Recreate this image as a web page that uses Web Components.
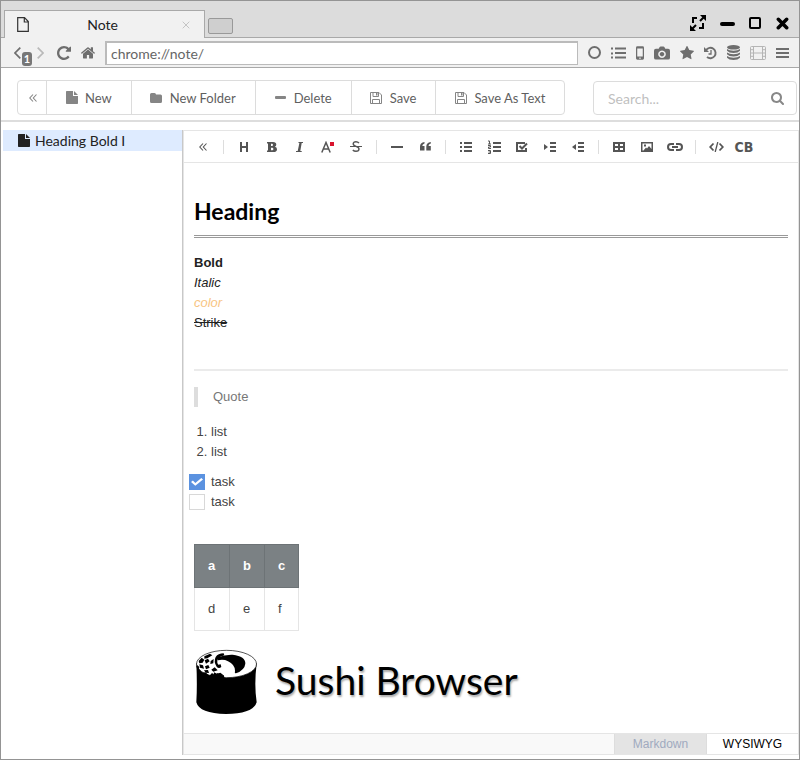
<!DOCTYPE html>
<html lang="en">
<head>
<meta charset="utf-8">
<meta name="viewport" content="width=device-width, initial-scale=1">
<title>Note</title>
<style>
  html, body { margin: 0; background: #fff; }
  body { font: 14px/20px Lato, "Liberation Sans", sans-serif; color: #222; }
</style>
</head>
<body>
<browser-window></browser-window>

<template id="browser-window">
  <style>
    :host { display: flex; flex-direction: column; min-height: 100vh; box-sizing: border-box; border: 1px solid #949494; background: #fff; }
    note-page { flex: 1; }
  </style>
  <title-bar><browser-tab>Note</browser-tab></title-bar>
  <nav-bar></nav-bar>
  <note-page></note-page>
</template>

<template id="title-bar">
  <style>
    :host { display: flex; align-items: flex-end; height: 37px; background: #dcdcdc; padding: 0 10px 0 3px; box-shadow: inset 0 -1px #a9a9a9; }
    .new { width: 25px; height: 16px; margin: 0 0 4px 3px; padding: 0; border: 1px solid #999; border-radius: 2px; background: #cfcfcf; }
    .controls { display: flex; align-items: center; gap: 14px; margin: 0 0 7px auto; color: #000; }
    .controls button { display: flex; padding: 0; border: 0; background: none; color: inherit; }
  </style>
  <slot></slot>
  <button class="new" aria-label="New tab"></button>
  <div class="controls">
    <button aria-label="Full screen"><ui-icon name="expand"></ui-icon></button>
    <button aria-label="Minimize"><ui-icon name="minimize"></ui-icon></button>
    <button aria-label="Maximize"><ui-icon name="maximize"></ui-icon></button>
    <button aria-label="Close window"><ui-icon name="close"></ui-icon></button>
  </div>
</template>

<template id="browser-tab">
  <style>
    :host { display: flex; align-items: center; box-sizing: border-box; width: 201px; height: 28px; padding: 0 14px 0 12px; border: 1px solid #a9a9a9; border-bottom: 0; background: #f1f1f1; color: #222; }
    span { flex: 1; text-align: center; font-size: 14px; }
    button { display: flex; padding: 0 0 0 6px; border: 0; background: none; color: #c4c4c4; }
    ui-icon[name="page"] { color: #333; }
  </style>
  <ui-icon name="page"></ui-icon>
  <span><slot></slot></span>
  <button aria-label="Close tab"><ui-icon name="cross"></ui-icon></button>
</template>

<template id="nav-bar">
  <style>
    :host { display: flex; align-items: center; gap: 10px; height: 29px; padding: 0 10px 0 13px; background: #f1f1f1; border-bottom: 1px solid #a9a9a9; color: #6e6e6e; }
    button { display: flex; position: relative; padding: 0; border: 0; background: none; color: inherit; }
    .history { display: flex; gap: 16px; margin-right: 3px; }
    .forward { color: #b9b9b9; }
    .badge { position: absolute; left: 8px; top: 5px; width: 10px; border-radius: 3px; background: #777; color: #fff; font: bold 11px/14px Lato, sans-serif; text-align: center; }
    input { flex: 1; min-width: 0; height: 24px; box-sizing: border-box; padding: 0 4px; border: 2px solid #bbb; border-right-width: 1px; border-bottom-width: 1px; background: #fff; color: #666; font: 14px Lato, sans-serif; outline: 0; }
    .light { color: #b5b5b5; }
  </style>
  <div class="history">
    <button aria-label="Back"><ui-icon name="back"></ui-icon><span class="badge">1</span></button>
    <button class="forward" aria-label="Forward"><ui-icon name="forward"></ui-icon></button>
  </div>
  <button aria-label="Reload"><ui-icon name="reload"></ui-icon></button>
  <button aria-label="Home"><ui-icon name="home"></ui-icon></button>
  <input type="text" aria-label="Address" value="chrome://note/">
  <button aria-label="Circle"><ui-icon name="circle"></ui-icon></button>
  <button aria-label="Tab list"><ui-icon name="tabs"></ui-icon></button>
  <button aria-label="Mobile view"><ui-icon name="mobile"></ui-icon></button>
  <button aria-label="Capture"><ui-icon name="camera"></ui-icon></button>
  <button aria-label="Favorites"><ui-icon name="star"></ui-icon></button>
  <button aria-label="History"><ui-icon name="history"></ui-icon></button>
  <button aria-label="Storage"><ui-icon name="database"></ui-icon></button>
  <button class="light" aria-label="Video"><ui-icon name="film"></ui-icon></button>
  <button aria-label="Menu"><ui-icon name="bars"></ui-icon></button>
</template>

<template id="note-page">
  <style>
    :host { display: flex; flex-direction: column; }
    main { flex: 1; display: flex; padding: 8px 0 4px 2px; }
    note-list { width: 179px; flex: none; }
    note-editor { flex: 1; min-width: 0; }
  </style>
  <note-actions></note-actions>
  <main>
    <note-list></note-list>
    <note-editor></note-editor>
  </main>
</template>

<template id="note-actions">
  <style>
    :host { display: flex; justify-content: space-between; align-items: flex-end; padding: 12px 2px 5px 16px; border-bottom: 2px solid #ddd; }
    .group { display: flex; height: 33px; border: 1px solid #dcdcdc; border-radius: 4px; }
    action-button + action-button { border-left: 1px solid #dcdcdc; }
    .search { display: flex; align-items: center; width: 204px; height: 34px; box-sizing: border-box; border: 1px solid #dcdcdc; border-radius: 4px; padding: 0 12px 0 14px; color: #888; }
    input { flex: 1; min-width: 0; padding: 0; border: 0; outline: 0; background: none; font: 14px Lato, sans-serif; }
    input::placeholder { color: #bfbfbf; opacity: 1; }
  </style>
  <div class="group">
    <action-button icon="angles" compact></action-button>
    <action-button icon="file">New</action-button>
    <action-button icon="folder">New Folder</action-button>
    <action-button icon="minus">Delete</action-button>
    <action-button icon="save">Save</action-button>
    <action-button icon="save">Save As Text</action-button>
  </div>
  <label class="search"><input type="search" placeholder="Search..." aria-label="Search"><ui-icon name="search"></ui-icon></label>
</template>

<template id="action-button">
  <style>
    :host { display: flex; }
    button { display: flex; align-items: center; gap: 5px; padding: 0 19px 0 16px; border: 0; background: none; color: #5f5f5f; font: 13px Lato, sans-serif; white-space: nowrap; }
    .icon { display: flex; justify-content: center; width: 17px; color: #858585; }
    :host([compact]) button { padding: 0 5px 0 6px; gap: 0; }
  </style>
  <button><span class="icon"><ui-icon></ui-icon></span><slot></slot></button>
</template>

<template id="note-list">
  <style>
    :host { display: block; border-right: 1px solid #c8c8c8; }
    a { display: flex; align-items: center; gap: 5px; height: 21px; padding-left: 15px; background: #deebff; color: #222; text-decoration: none; font-size: 14px; }
  </style>
  <nav aria-label="Notes"><a href="#note"><ui-icon name="file"></ui-icon>Heading Bold I</a></nav>
</template>

<template id="note-editor">
  <style>
    :host { display: flex; flex-direction: column; border: 1px solid #e5e5e5; }
    note-document { flex: 1; }
  </style>
  <editor-toolbar></editor-toolbar>
  <note-document id="note"></note-document>
  <mode-switch></mode-switch>
</template>

<template id="editor-toolbar">
  <style>
    :host { display: flex; align-items: center; height: 31px; padding: 0 5px; border-bottom: 1px solid #e5e5e5; color: #555; }
    button { display: flex; align-items: center; justify-content: center; width: 28px; height: 28px; padding: 0; border: 0; background: none; color: inherit; font: bold 14px/16px "Liberation Sans Narrow", "DejaVu Sans Condensed", sans-serif; }
    i { width: 1px; height: 14px; margin: 0 6px; background: #ddd; }
  </style>
</template>

<template id="note-document">
  <style>
    :host { display: block; padding: 34px 10px 15px; font: 13px/20px "Liberation Sans", Arial, sans-serif; color: #222; }
    h1 { margin: 0 0 15px; padding-bottom: 10px; border-bottom: 3px double #999; font: bold 23px/28px Lato, sans-serif; color: #000; }
    p { margin: 0; }
    .color { color: #f8c583; }
    hr { height: 2px; margin: 36px 0 16px; border: 0; background: #ebebeb; }
    blockquote { margin: 0 0 15px; padding-left: 15px; border-left: 4px solid #ddd; color: #777; }
    ol { margin: 0 0 10px; padding-left: 17px; color: #444; }
    ul { list-style: none; margin: 0 0 32px -5px; padding: 0; color: #444; }
    label { display: flex; align-items: center; gap: 6px; }
    input { appearance: none; width: 16px; height: 16px; box-sizing: border-box; margin: 0; border: 1px solid #d8d8d8; background: #fff; }
    input:checked { border-color: #5b92e0; background: #5b92e0; display: grid; place-items: center; }
    input:checked::before { content: ""; width: 12px; height: 8px; background: #fff; clip-path: polygon(0 50%, 16% 32%, 36% 62%, 86% 0, 100% 18%, 36% 98%); }
    table { border-collapse: collapse; color: #444; }
    th, td { width: 21px; height: 42px; padding: 0 0 0 13px; text-align: left; border: 1px solid #e5e5e5; }
    th:last-child { width: 20px; }
    td:last-child { width: 20px; }
    th { background: #7b8184; color: #fff; border-color: #6d7376; }
    figure { display: flex; align-items: flex-start; gap: 16px; margin: 18px 0 0; color: #000; }
    figcaption { font: 39px/62px Lato, sans-serif; text-shadow: 1px 2px 2px #aaa; white-space: nowrap; }
  </style>
  <h1>Heading</h1>
  <p><b>Bold</b></p>
  <p><em>Italic</em></p>
  <p class="color"><em>color</em></p>
  <p><s>Strike</s></p>
  <hr>
  <blockquote>Quote</blockquote>
  <ol><li>list</li><li>list</li></ol>
  <ul>
    <li><label><input type="checkbox" checked>task</label></li>
    <li><label><input type="checkbox">task</label></li>
  </ul>
  <table>
    <thead><tr><th>a</th><th>b</th><th>c</th></tr></thead>
    <tbody><tr><td>d</td><td>e</td><td>f</td></tr></tbody>
  </table>
  <figure><ui-icon name="sushi"></ui-icon><figcaption>Sushi Browser</figcaption></figure>
</template>

<template id="mode-switch">
  <style>
    :host { display: flex; justify-content: flex-end; height: 20px; border-top: 1px solid #e5e5e5; background: #f9f9f9; }
    button { width: 92px; padding: 0; border: 0; border-left: 1px solid #ddd; background: #e4e4e4; color: #a0aabf; font: 12px "Liberation Sans", Arial, sans-serif; }
    button[aria-pressed="true"] { background: #fff; color: #000; }
  </style>
  <button aria-pressed="false">Markdown</button>
  <button aria-pressed="true">WYSIWYG</button>
</template>

<script>
  // Each entry: width, height, viewBox, markup.
  const line = (body, width) => `<g fill="none" stroke="currentColor" stroke-width="${width}">${body}</g>`;
  const ICONS = {
    expand: [16, 16, "0 0 16 16", line('<path d="M3 8V3h4M13 8v5H9M10 6l4-4M6 10l-4 4"/>', 2) + '<path d="M10 0h6v6zM0 10v6h6z"/>'],
    minimize: [15, 16, "0 0 15 16", '<rect y="7" width="15" height="4" rx="2"/>'],
    maximize: [13, 12, "0 0 13 12", line('<rect x="1" y="1" width="10" height="10" rx="1"/>', 2)],
    close: [13, 13, "0 0 14 14", line('<path d="M2.500 2.500l9 9M11.500 2.500l-9 9" stroke-linecap="round"/>', 3.8)],
    page: [12, 15, "0 0 12 15", line('<path d="M1 .7h6.500L11.300 4.500v9.800H.7V.7zM7.300 1v4h4"/>', 1.2)],
    cross: [8, 8, "0 0 8 8", line('<path d="M.7.7l6.600 6.600M7.300.7L.7 7.300"/>', 1)],
    back: [7, 12, "0 0 7 12", line('<path d="M6.300.7L1 6l5.300 5.300"/>', 1.7)],
    forward: [7, 12, "0 0 7 12", line('<path d="M.7.7L6 6 .7 11.300"/>', 1.7)],
    reload: [14, 14, "128 128 1536 1536", '<path d="M1664 256v448q0 26-19 45t-45 19h-448q-42 0-59-40-17-39 14-69l138-138q-148-137-349-137-104 0-198.500 40.500t-163.500 109.500-109.500 163.500-40.500 198.500 40.500 198.500 109.500 163.500 163.500 109.500 198.500 40.500q119 0 225-52t179-147q7-10 23-12 15 0 25 9l137 138q9 8 9.500 20.500t-7.500 22.500q-109 132-264 204.500t-327 72.500q-156 0-298-61t-245-164-164-245-61-298 61-298 164-245 245-164 298-61q147 0 284.500 55.500t244.500 156.500l130-129q29-31 70-14 39 17 39 59z"/>'],
    home: [14, 14, "90 160 1612 1500", '<path d="M1472 992v480q0 26-19 45t-45 19h-384v-384h-256v384h-384q-26 0-45-19t-19-45v-480q0-1 .5-3t.5-3l575-474 575 474q1 2 1 6zm223-69l-62 74q-8 9-21 11h-3q-13 0-21-7l-692-577-692 577q-12 8-24 7-13-2-21-11l-62-74q-8-10-7-23.500t11-21.500l719-599q32-26 76-26t76 26l244 204v-195q0-14 9-23t23-9h192q14 0 23 9t9 23v408l219 182q10 8 11 21.500t-7 23.500z"/>'],
    circle: [13, 13, "0 0 13 13", line('<circle cx="6.500" cy="6.500" r="5.500"/>', 2)],
    tabs: [15, 12, "0 0 15 12", '<path d="M0 .5h2v2H0zm0 5h2v2H0zm0 4h2v2H0zM4 .5h11v2H4zm0 4.500h11v2H4zm0 4.500h11v2H4z"/>'],
    mobile: [8, 14, "0 0 9 15", '<path fill-rule="evenodd" d="M1.500 0h6A1.500 1.500 0 0 1 9 1.500v12A1.500 1.500 0 0 1 7.500 15h-6A1.500 1.500 0 0 1 0 13.500v-12A1.500 1.500 0 0 1 1.500 0zM1.400 2.500v9h6.200v-9zM4.500 12.500a.8.8 0 1 0 .01 0z"/>'],
    camera: [16, 14, "0 0 17 14", '<path fill-rule="evenodd" d="M2 2.500h3L6 .7Q6.300 0 7 0h3q.7 0 1 .7l1 1.800h3a2 2 0 0 1 2 2V12a2 2 0 0 1-2 2H2a2 2 0 0 1-2-2V4.500a2 2 0 0 1 2-2zM8.500 4.300a4 4 0 1 0 .01 0zm0 1.600a2.400 2.400 0 1 1-.01 0z"/>'],
    star: [14, 14, "64 100 1664 1564", '<path d="M1728 647q0 22-26 48l-363 354 86 500q1 7 1 20 0 21-10.500 35.500t-30.500 14.500q-19 0-40-12l-449-236-449 236q-22 12-40 12-21 0-31.500-14.500t-10.500-35.500q0-6 2-20l86-500-364-354q-25-27-25-48 0-37 56-46l502-73 225-455q19-41 49-41t49 41l225 455 502 73q56 9 56 46z"/>'],
    history: [13, 14, "0 0 13 14", line('<path d="M2 4.200A5.200 5.200 0 1 1 3 11"/><path d="M7 4v4H4.500" stroke-width="1.300"/>', 1.9) + '<path d="M0 1v5h5z"/>'],
    database: [13, 15, "0 0 13 15", '<ellipse cx="6.500" cy="2.300" rx="6.500" ry="2.300"/><path d="M0 4q2 1.700 6.500 1.700T13 4v1.700Q11 8 6.500 8T0 5.700zM0 7.500q2 1.700 6.500 1.700T13 7.500v1.700q-2 2.300-6.500 2.300T0 9.200zM0 11q2 1.700 6.500 1.700T13 11v1.700Q11 15 6.500 15T0 12.700z"/>'],
    film: [16, 14, "0 0 16 14", line('<rect x=".5" y=".5" width="15" height="13" rx="1"/><path d="M3.500 0v14M12.500 0v14M3.500 7h9M0 3.700h3.500M0 7h3.500M0 10.300h3.500M12.500 3.700H16M12.500 7H16M12.500 10.300H16"/>', 1)],
    bars: [13, 12, "0 0 13 12", '<path d="M0 1h13v2H0zm0 4h13v2H0zm0 4h13v2H0z"/>'],
    angles: [8, 8, "0 0 8 8", line('<path d="M4 .5L.8 4 4 7.500M7.500.5L4.300 4l3.200 3.500"/>', 1.1)],
    file: [12, 13, "0 0 12 13", '<path d="M.7 0H7v5h5v7.300q0 .7-.7.7H.7Q0 13 0 12.300V.7Q0 0 .7 0zM8 0l4 4H8z"/>'],
    folder: [12, 10, "0 0 12 10", '<path d="M1.500 0h3Q6 0 6 1.500h4.500Q12 1.500 12 3v5.500Q12 10 10.500 10h-9Q0 10 0 8.500v-7Q0 0 1.500 0z"/>'],
    minus: [11, 3, "0 0 11 3", '<rect width="11" height="3" rx="1"/>'],
    save: [12, 12, "0 0 12 12", line('<path d="M.5.5h8.500l2.500 2.500v8.500H.5zM2.500 11.500v-4h7v4M3 .5v4h5.500v-4"/>', 1) + '<path d="M6 1h1.500v2.500H6z"/>'],
    search: [13, 13, "64 128 1664 1664", '<path d="M1216 832q0-185-131.500-316.500t-316.500-131.500-316.500 131.500-131.500 316.500 131.500 316.500 316.500 131.500 316.500-131.500 131.500-316.500zm512 832q0 52-38 90t-90 38q-54 0-90-38l-343-342q-179 124-399 124-143 0-273.500-55.500t-225-150-150-225-55.500-273.500 55.500-273.500 150-225 225-150 273.500-55.500 273.500 55.500 225 150 150 225 55.500 273.500q0 220-124 399l343 343q37 37 37 90z"/>'],
    h: [10, 10, "0 0 10 10", '<path d="M1 0h2v4h4V0h2v10H7V6H3v4H1z"/>'],
    bold: [10, 10, "0 0 10 10", '<path fill-rule="evenodd" d="M0 0h6q3.300 0 3.300 2.600 0 1.700-1.500 2.200Q10 5.300 10 7.200 10 10 6.500 10H0V8.500h1v-7H0zM4 1.800v2.200h1q1 0 1-1.100T5 1.800zm0 4v2.400h1.200q1.200 0 1.200-1.200T5.200 5.800z"/>'],
    italic: [8, 10, "0 0 8 10", '<path d="M2.500 0H7v1H5.700L4.300 9h1.400v1H0V9h1.700l1.700-8H2.500z"/>'],
    textcolor: [14, 12, "0 0 14 12", line('<path d="M.8 11.500L5 1.500l4.200 10M2.300 8h5.400"/>', 1.5) + '<path fill="#d9142e" d="M9 1h4v4H9z"/>'],
    strike: [12, 11, "0 0 12 11", line('<path d="M9 2Q7.800.7 6 .7 3.200.7 3.200 2.800 3.200 4.500 6 5.300 9 6.200 9 8q0 2.300-3 2.300Q4 10.300 2.800 9"/><path d="M0 5.500h12" stroke-width="1"/>', 1.4)],
    rule: [12, 2, "0 0 12 2", '<path d="M0 0h12v2H0z"/>'],
    quote: [11, 9, "0 0 11 9", '<path d="M4.500 0v1.400Q2.300 2 2.300 4h2.200v4.500H0V4.500Q0 .8 4.500 0zM10.800 0v1.400Q8.500 2 8.500 4h2.300v4.500H6.300V4.500Q6.300.8 10.800 0z"/>'],
    ul: [12, 10, "0 0 12 10", '<path d="M0 0h2v2H0zm0 4h2v2H0zm0 4h2v2H0zM4 0h8v2H4zm0 4h8v2H4zm0 4h8v2H4z"/>'],
    ol: [13, 14, "0 0 13 14", '<path d="M5 2h8v2H5zm0 4h8v2H5zm0 4h8v2H5z"/>' + line('<path d="M0 1h1.500v3M0 4h3M0 5.500h2.500v1.500H.5v1.500H3M0 10.500h2.500v3H0M.5 12h2"/>', 1)],
    task: [12, 10, "0 0 12 10", line('<path d="M9 1H1v8h9V6"/><path d="M3.500 4l2.500 2.500L11 1.500"/>', 2)],
    indent: [12, 10, "0 0 12 10", '<path d="M0 2l4 3-4 3zM6 0h6v2H6zm0 4h6v2H6zm0 4h6v2H6z"/>'],
    outdent: [12, 10, "0 0 12 10", '<path d="M4 2L0 5l4 3zM6 0h6v2H6zm0 4h6v2H6zm0 4h6v2H6z"/>'],
    table: [12, 10, "0 0 12 10", '<path fill-rule="evenodd" d="M0 0h12v10H0zM2 2v2h3V2zm5 0v2h3V2zM2 6v2h3V6zm5 0v2h3V6z"/>'],
    image: [12, 10, "0 0 12 10", '<path fill-rule="evenodd" d="M0 0h12v10H0zM1.500 1.500v7h1L5 5.500l1 1L8 4l2.500 3V1.500zM3 2.500h2v2H3z"/>'],
    link: [16, 8, "0 0 16 8", line('<path d="M7 1H4a3 3 0 0 0 0 6h3M9 1h3a3 3 0 0 1 0 6H9M5 4h6"/>', 2)],
    code: [15, 10, "0 0 15 10", line('<path d="M4.500 1.500L1.200 5l3.300 3.500M10.500 1.500L13.800 5l-3.300 3.500"/><path d="M8.800 0L6.200 10" stroke-width="1.300"/>', 1.8)],
    sushi: [65, 66, "12 12 195 198", '<path d="M19 55Q22 120 19 172 28 206 108 207 190 206 200 172 192 120 200 55z"/><ellipse cx="109.500" cy="57" rx="90" ry="41" fill="#fff" stroke="#000" stroke-width="2"/><path d="M19 62Q24 90 60 99L104 99 101 90 88 91 84 84 74 90 66 84 58 92 46 82 36 84 26 70z"/><path d="M84 37Q105 28 128 29 167 34 166 56 164 75 138 85 133 86 135 77 134 58 114 49 101 42 84 46z"/><path d="M101 25Q84 25 77 36 70 50 80 65 86 72 94 66L92 58 85 59Q76 45 91 35L103 31z"/><path d="M43 34l17-8 7 5-15 9-9 1zM26 48l9-10 8 6-5 9-10 2zM44 46l10-5 5 8-11 7zM62 48l9-6-1 13-9 2zM28 58l11 3 3 10-12-3zM45 64l10-4 4 8-11 5zM64 74l10-7 9 9-13 4zM42 76l12-1 3 9-10-1z"/><path d="M22 60l6 6-3 12-5-10zM72 82l9 4 10-3 8 6-12 9-17-5z"/>'],
  };

  function component(name, setup) {
    customElements.define(name, class extends HTMLElement {
      connectedCallback() {
        if (this.shadowRoot) return;
        const root = this.attachShadow({ mode: "open" });
        root.append(document.getElementById(name).content.cloneNode(true));
        if (setup) setup(this, root);
      }
    });
  }

  customElements.define("ui-icon", class extends HTMLElement {
    static observedAttributes = ["name"];
    constructor() { super(); this.attachShadow({ mode: "open" }); }
    attributeChangedCallback() {
      const [w, h, box, body] = ICONS[this.getAttribute("name")];
      this.shadowRoot.innerHTML = `<style>:host{display:inline-flex;flex:none}svg{display:block;fill:currentColor}</style><svg width="${w}" height="${h}" viewBox="${box}" aria-hidden="true">${body}</svg>`;
    }
  });

  component("action-button", (host, root) => {
    root.querySelector("ui-icon").setAttribute("name", host.getAttribute("icon"));
    if (host.hasAttribute("compact")) root.querySelector("button").setAttribute("aria-label", "Collapse");
  });

  const TOOLS = [
    ["angles", "Collapse"], null,
    ["h", "Heading"], ["bold", "Bold"], ["italic", "Italic"], ["textcolor", "Text color"], ["strike", "Strike"], null,
    ["rule", "Line"], ["quote", "Blockquote"], null,
    ["ul", "Unordered list"], ["ol", "Ordered list"], ["task", "Task"], ["indent", "Indent"], ["outdent", "Outdent"], null,
    ["table", "Table"], ["image", "Image"], ["link", "Link"], null,
    ["code", "Code"], ["CB", "Code block"],
  ];
  component("editor-toolbar", (host, root) => {
    const holder = document.createElement("template");
    holder.innerHTML = TOOLS.map(tool => {
      if (!tool) return "<i></i>";
      const [icon, label] = tool;
      return `<button aria-label="${label}">${ICONS[icon] ? `<ui-icon name="${icon}"></ui-icon>` : icon}</button>`;
    }).join("");
    root.append(holder.content);
  });

  ["note-document", "mode-switch", "note-editor", "note-list", "note-actions", "note-page",
   "nav-bar", "browser-tab", "title-bar", "browser-window"].forEach(name => component(name));
</script>
</body>
</html>
